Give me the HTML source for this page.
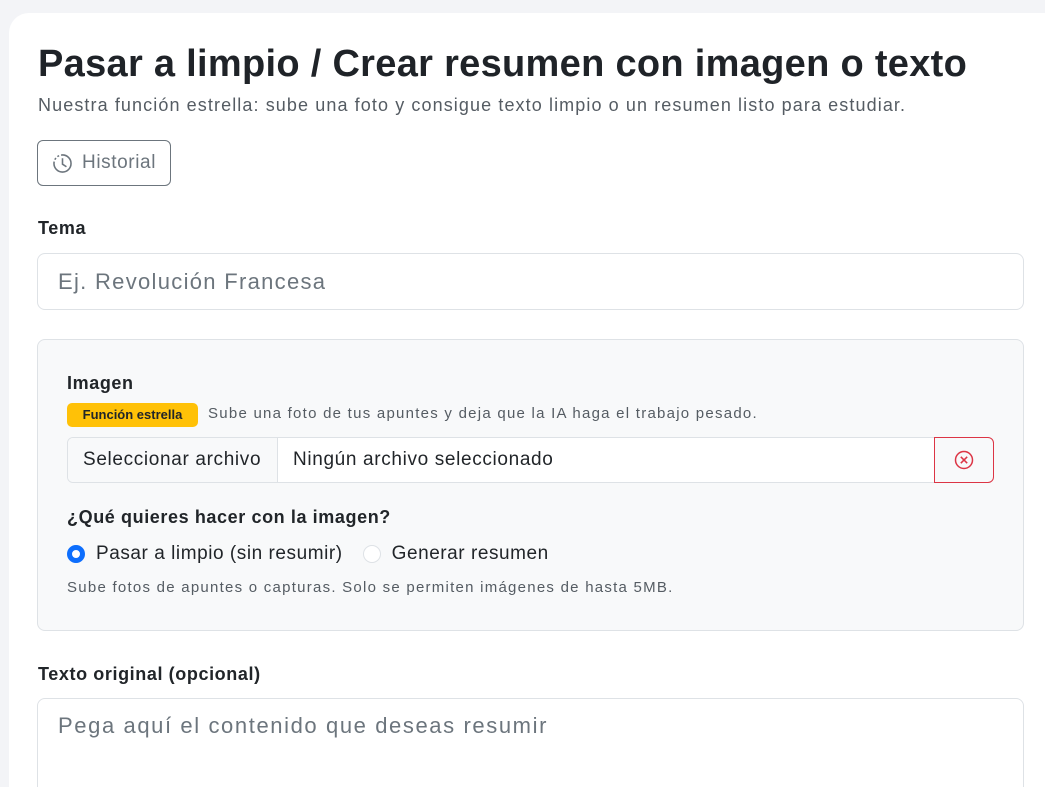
<!DOCTYPE html>
<html><head><meta charset="utf-8"><style>
*{box-sizing:border-box;margin:0;padding:0}
html,body{width:1045px;height:787px;overflow:hidden}
body{background:#f3f4f7;font-family:"Liberation Sans",sans-serif;color:#212529;position:relative}
.card{position:absolute;left:9px;top:13px;width:1100px;height:800px;background:#fff;border-radius:20px}
.abs{position:absolute}
h1{position:absolute;left:38px;top:43px;font-size:38px;font-weight:700;color:#1f2328;letter-spacing:0.3px;white-space:nowrap}
.sub{left:38px;top:95px;font-size:18px;color:#555c63;white-space:nowrap;letter-spacing:1.1px}
.btn{left:37px;top:140px;width:134px;height:46px;border:1px solid #6c757d;border-radius:6px;color:#6c757d;font-size:19px;display:flex;align-items:center;padding-left:14px;gap:9px;letter-spacing:0.6px}
.lbl{font-size:18px;font-weight:700;color:#212529;white-space:nowrap;letter-spacing:0.6px}
.inp{left:37px;top:253px;width:987px;height:57px;border:1px solid #dee2e6;border-radius:8px;font-size:22px;color:#6c757d;padding:15px 20px;letter-spacing:1.3px;white-space:nowrap}
.panel{left:37px;top:339px;width:987px;height:292px;background:#f8f9fa;border:1px solid #dee2e6;border-radius:8px}
.badge{left:67px;top:403px;width:131px;height:24px;background:#ffc107;border-radius:5px;font-size:13px;font-weight:700;color:#212529;text-align:center;line-height:24px}
.file{left:67px;top:437px;width:868px;height:46px;border:1px solid #dee2e6;border-radius:6px 0 0 6px;background:#fff;display:flex;font-size:19px;overflow:hidden;letter-spacing:0.65px;white-space:nowrap}
.file .a{width:210px;background:#f8f9fa;border-right:1px solid #dee2e6;display:flex;align-items:center;padding-left:15px;color:#212529}
.file .b{display:flex;align-items:center;padding-left:15px;color:#212529}
.x{left:934px;top:437px;width:60px;height:46px;border:1px solid #dc3545;border-radius:0 6px 6px 0;display:flex;align-items:center;justify-content:center}
.radio{width:18px;height:18px;border-radius:50%;display:inline-block}
.ta{left:37px;top:698px;width:987px;height:120px;border:1px solid #dee2e6;border-radius:8px;font-size:22px;color:#6c757d;padding:14px 20px;letter-spacing:1.6px;white-space:nowrap}
.help{font-size:15px;color:#555c63;white-space:nowrap;letter-spacing:1.25px}
</style></head><body>
<div class="card"></div>
<h1>Pasar a limpio / Crear resumen con imagen o texto</h1>
<div class="abs sub">Nuestra función estrella: sube una foto y consigue texto limpio o un resumen listo para estudiar.</div>
<div class="abs btn"><svg width="21" height="21" viewBox="0 0 16 16" fill="none" stroke="#6c757d" stroke-width="1.2"><path d="M8 1.5a6.5 6.5 0 1 1-6.5 6.5"/><path d="M1.5 8a6.5 6.5 0 0 1 6.5-6.5" stroke-dasharray="1.5 1.5"/><path d="M8 4v4.5l3 2"/></svg>Historial</div>
<div class="abs lbl" style="left:38px;top:218px">Tema</div>
<div class="abs inp">Ej. Revolución Francesa</div>
<div class="abs panel"></div>
<div class="abs lbl" style="left:67px;top:373px">Imagen</div>
<div class="abs badge">Función estrella</div>
<div class="abs help" style="left:208px;top:405px">Sube una foto de tus apuntes y deja que la IA haga el trabajo pesado.</div>
<div class="abs file"><div class="a">Seleccionar archivo</div><div class="b">Ningún archivo seleccionado</div></div>
<div class="abs x"><svg width="20" height="20" viewBox="0 0 20 20" fill="none" stroke="#dc3545" stroke-width="1.5"><circle cx="10" cy="10" r="8.5"/><path d="M6.8 6.8l6.4 6.4M13.2 6.8l-6.4 6.4"/></svg></div>
<div class="abs lbl" style="left:67px;top:507px">¿Qué quieres hacer con la imagen?</div>
<div class="abs" style="left:67px;top:543px;font-size:19px;display:flex;align-items:center;white-space:nowrap;color:#212529;letter-spacing:0.55px">
<span class="radio" style="background:#fff;border:5px solid #0d6efd"></span><span style="margin-left:11px">Pasar a limpio (sin resumir)</span>
<span class="radio" style="background:#fff;border:1px solid #dee2e6;margin-left:20px"></span><span style="margin-left:11px">Generar resumen</span></div>
<div class="abs help" style="left:67px;top:579px">Sube fotos de apuntes o capturas. Solo se permiten imágenes de hasta 5MB.</div>
<div class="abs lbl" style="left:38px;top:664px">Texto original (opcional)</div>
<div class="abs ta">Pega aquí el contenido que deseas resumir</div>
</body></html>
